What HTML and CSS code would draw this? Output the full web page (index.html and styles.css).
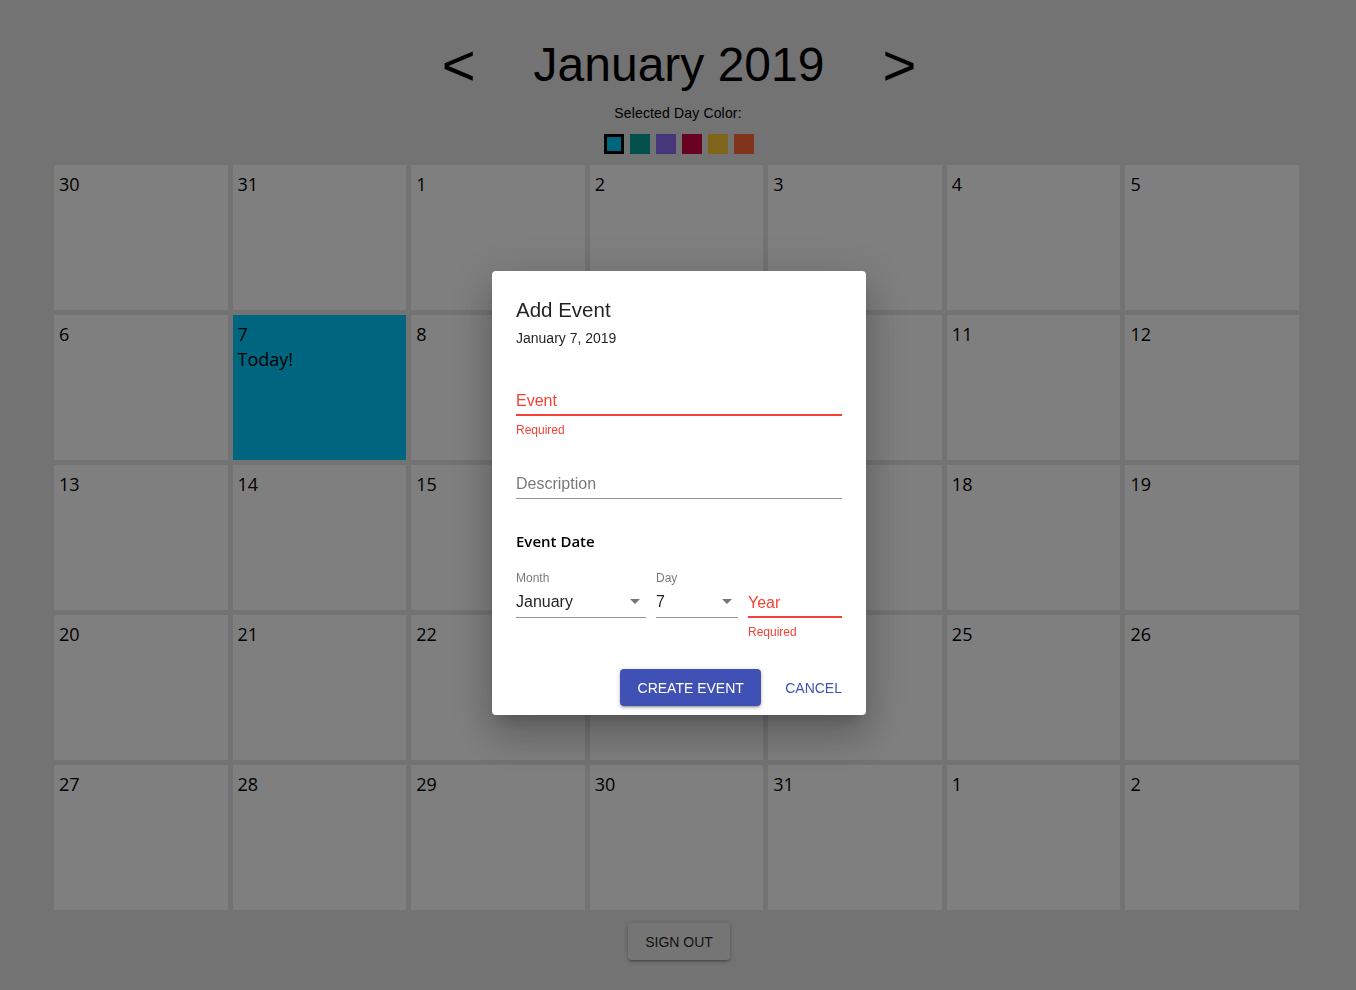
FILE: index.html
```html
<!DOCTYPE html>
<html lang="en">
<head>
<meta charset="utf-8">
<title>Calendar</title>
<link rel="stylesheet" href="styles.css">
</head>
<body>
<main class="page">
  <header class="month-header">
    <span class="nav">&lt;</span>
    <h1 class="month-title">January 2019</h1>
    <span class="nav">&gt;</span>
  </header>
  <p class="color-label">Selected Day Color:</p>
  <div class="swatches">
    <span class="swatch swatch-blue selected"></span>
    <span class="swatch swatch-teal"></span>
    <span class="swatch swatch-purple"></span>
    <span class="swatch swatch-red"></span>
    <span class="swatch swatch-gold"></span>
    <span class="swatch swatch-orange"></span>
  </div>
  <section class="grid">
    <div class="cell">30</div><div class="cell">31</div><div class="cell">1</div><div class="cell">2</div><div class="cell">3</div><div class="cell">4</div><div class="cell">5</div>
    <div class="cell">6</div><div class="cell today">7<br>Today!</div><div class="cell">8</div><div class="cell">9</div><div class="cell">10</div><div class="cell">11</div><div class="cell">12</div>
    <div class="cell">13</div><div class="cell">14</div><div class="cell">15</div><div class="cell">16</div><div class="cell">17</div><div class="cell">18</div><div class="cell">19</div>
    <div class="cell">20</div><div class="cell">21</div><div class="cell">22</div><div class="cell">23</div><div class="cell">24</div><div class="cell">25</div><div class="cell">26</div>
    <div class="cell">27</div><div class="cell">28</div><div class="cell">29</div><div class="cell">30</div><div class="cell">31</div><div class="cell">1</div><div class="cell">2</div>
  </section>
  <div class="signout-row">
    <button class="signout">SIGN OUT</button>
  </div>
</main>

<div class="backdrop">
  <div class="dialog">
    <h2 class="dialog-title">Add Event</h2>
    <p class="dialog-date">January 7, 2019</p>

    <div class="field field-error field-event">
      <div class="input">Event</div>
    </div>
    <p class="helper">Required</p>

    <div class="field field-desc">
      <div class="input placeholder">Description</div>
    </div>

    <h3 class="section-title">Event Date</h3>

    <div class="date-row">
      <div class="col col-month">
        <div class="small-label">Month</div>
        <div class="select">
          <span>January</span>
          <svg class="arrow" width="10" height="5" viewBox="0 0 10 5"><path d="M0 0h10L5 5z" fill="rgba(0,0,0,0.54)"/></svg>
        </div>
      </div>
      <div class="col col-day">
        <div class="small-label">Day</div>
        <div class="select">
          <span>7</span>
          <svg class="arrow" width="10" height="5" viewBox="0 0 10 5"><path d="M0 0h10L5 5z" fill="rgba(0,0,0,0.54)"/></svg>
        </div>
      </div>
      <div class="col col-year">
        <div class="year-input">Year</div>
        <p class="helper">Required</p>
      </div>
    </div>

    <div class="actions">
      <button class="btn-primary">CREATE EVENT</button>
      <button class="btn-text">CANCEL</button>
    </div>
  </div>
</div>
</body>
</html>
```

FILE: styles.css
```css
* { box-sizing: border-box; }

html, body {
  margin: 0;
  padding: 0;
}

body {
  background: #e6e6e6;
  font-family: "Liberation Sans", Arial, sans-serif;
  color: #000;
  width: 1356px;
  height: 990px;
  overflow: hidden;
}

.page {
  padding-top: 37px;
}

.month-header {
  display: flex;
  justify-content: center;
  align-items: center;
  gap: 58px;
  height: 56px;
  padding-left: 2px;
}

.nav {
  font-size: 58px;
  line-height: 56px;
}

.month-title {
  margin: 0;
  font-size: 48px;
  line-height: 56px;
  font-weight: normal;
}

.color-label {
  margin: 12px 0 0;
  text-align: center;
  font-size: 14px;
  line-height: 16px;
  letter-spacing: 0.15px;
}

.swatches {
  display: flex;
  justify-content: center;
  gap: 6px;
  margin-top: 13px;
  padding-left: 1px;
}

.swatch {
  width: 20px;
  height: 20px;
  display: block;
}

.swatch.selected { border: 3px solid #000; }
.swatch-blue { background: #00ccff; }
.swatch-teal { background: #00a09a; }
.swatch-purple { background: #8a6ef2; }
.swatch-red { background: #d0003e; }
.swatch-gold { background: #feca32; }
.swatch-orange { background: #ff6636; }

.grid {
  display: grid;
  grid-template-columns: repeat(7, 1fr);
  grid-auto-rows: 145px;
  gap: 5px;
  margin: 11px 57px 0 54px;
}

.cell {
  background: #ffffff;
  padding: 7px 5px;
  font-family: "Open Sans", "Noto Sans", sans-serif;
  font-size: 18px;
  line-height: 25px;
  color: #000;
}

.cell.today {
  background: #00ccff;
}

.signout-row {
  display: flex;
  justify-content: center;
  margin-top: 13px;
  padding-left: 2px;
}

.signout {
  width: 102px;
  height: 37px;
  border: none;
  border-radius: 4px;
  background: #ebebeb;
  color: rgba(0, 0, 0, 0.87);
  font-family: "Liberation Sans", Arial, sans-serif;
  font-size: 14px;
  padding: 0;
  box-shadow: 0 1px 5px rgba(0,0,0,0.2), 0 2px 2px rgba(0,0,0,0.14), 0 3px 1px -2px rgba(0,0,0,0.12);
}

/* modal */
.backdrop {
  position: fixed;
  inset: 0;
  background: rgba(0, 0, 0, 0.5);
  display: flex;
  align-items: center;
  justify-content: center;
  padding: 0 0 5px 2px;
}

.dialog {
  width: 374px;
  background: #fff;
  border-radius: 4px;
  padding: 0 24px 8px;
  box-shadow: 0 11px 15px -7px rgba(0,0,0,0.2), 0 24px 38px 3px rgba(0,0,0,0.14), 0 9px 46px 8px rgba(0,0,0,0.12);
  font-family: "Liberation Sans", Arial, sans-serif;
}

.dialog-title {
  margin: 0;
  padding-top: 27px;
  font-size: 20.5px;
  line-height: 24px;
  font-weight: normal;
  color: rgba(0, 0, 0, 0.87);
}

.dialog-date {
  margin: 8px 0 0;
  font-size: 14px;
  line-height: 16px;
  color: rgba(0, 0, 0, 0.87);
}

.field .input {
  font-size: 16px;
  line-height: 19px;
}

.field-event {
  margin-top: 45px;
}

.field-event .input {
  color: #f44336;
  padding-bottom: 4px;
  border-bottom: 2px solid #f44336;
}

.helper {
  margin: 7px 0 0;
  font-size: 12px;
  line-height: 14px;
  color: #f44336;
}

.field-desc {
  margin-top: 37px;
}

.field-desc .input {
  color: rgba(0, 0, 0, 0.54);
  padding-bottom: 5px;
  border-bottom: 1px solid rgba(0, 0, 0, 0.42);
}

.section-title {
  margin: 32px 0 0;
  font-family: "Open Sans", "Noto Sans", sans-serif;
  font-size: 15px;
  line-height: 20px;
  font-weight: 600;
  color: #000;
}

.date-row {
  display: flex;
  gap: 10px;
  margin-top: 20px;
}

.col-month { width: 130px; }
.col-day { width: 82px; }
.col-year { flex: 1; }

.small-label {
  font-size: 12px;
  line-height: 14px;
  color: rgba(0, 0, 0, 0.54);
}

.select {
  margin-top: 7px;
  display: flex;
  justify-content: space-between;
  align-items: center;
  font-size: 16px;
  line-height: 19px;
  color: rgba(0, 0, 0, 0.87);
  padding: 0 6px 6px 0;
  border-bottom: 1px solid rgba(0, 0, 0, 0.42);
}

.col-day .select { padding-right: 6px; }

.select .arrow { display: block; }

.year-input {
  margin-top: 21px;
  padding: 1px 0 4px;
  font-size: 16px;
  line-height: 19px;
  color: #f44336;
  border-bottom: 2px solid #f44336;
}

.col-year .helper { margin-top: 7px; }

.actions {
  display: flex;
  justify-content: flex-end;
  align-items: center;
  gap: 24px;
  margin-top: 30px;
}

.btn-primary {
  width: 141px;
  height: 37px;
  padding: 0;
  border: none;
  border-radius: 4px;
  background: #3f51b5;
  color: #fff;
  font-family: "Liberation Sans", Arial, sans-serif;
  font-size: 14px;
  box-shadow: 0 1px 5px rgba(0,0,0,0.2), 0 2px 2px rgba(0,0,0,0.14), 0 3px 1px -2px rgba(0,0,0,0.12);
}

.btn-text {
  padding: 0;
  border: none;
  background: none;
  color: #3f51b5;
  font-family: "Liberation Sans", Arial, sans-serif;
  font-size: 14px;
  line-height: 37px;
  padding-top: 1px;
}
```
